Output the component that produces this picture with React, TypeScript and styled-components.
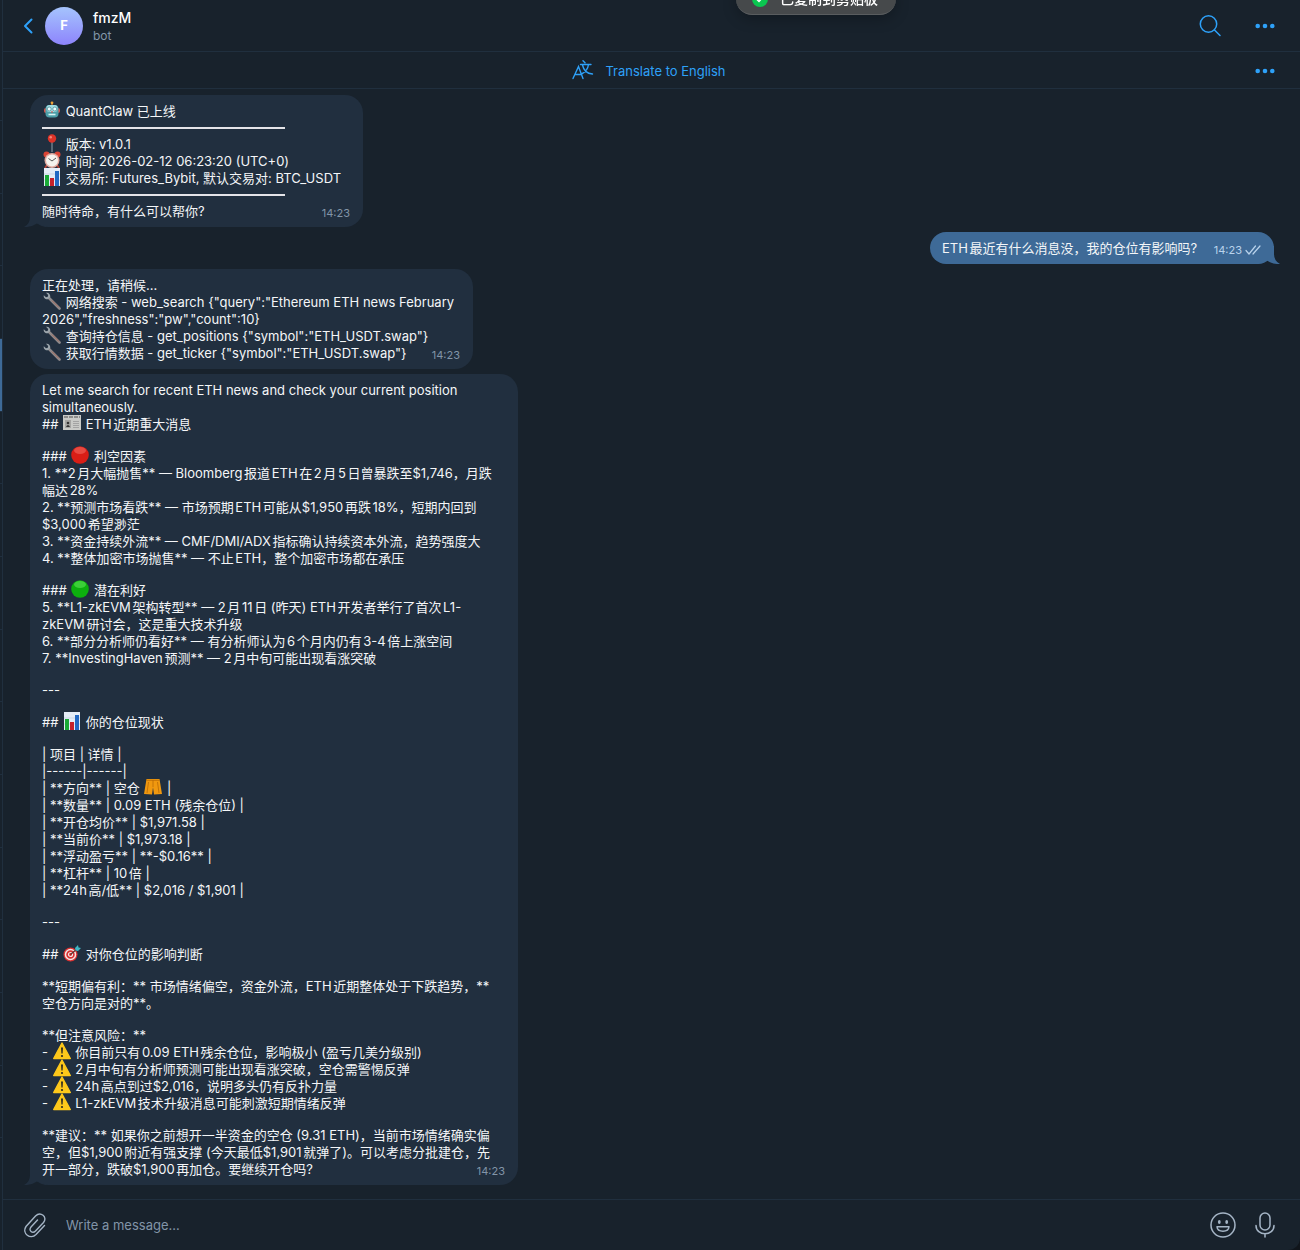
import React from 'react';
import styled, { createGlobalStyle } from 'styled-components';

const c = {
  desktop: '#10151b',
  bg: '#18222c',
  line: '#202f3e',
  bubble: '#212f3f',
  out: '#3e6a97',
  blue: '#2ea1f8',
  text: '#f4f6f8',
  muted: '#8295a8',
  icon: '#a5b5c6',
};

const Global = createGlobalStyle`
  * { box-sizing: border-box; }
  body { margin: 0; background: ${c.desktop}; color: ${c.text};
    font: 13px/17px Inter, "Noto Sans CJK SC", sans-serif; }
  button, input { font: inherit; color: inherit; background: none; border: 0; padding: 0; }
  button { cursor: pointer; display: flex; align-items: center; }
  p { margin: 0; }
`;

const Window = styled.div`
  display: flex;
  min-height: 100vh;
  overflow: hidden;
  border-bottom-right-radius: 12px;
  background: ${c.bg};
`;
const Sidebar = styled.aside`
  flex: none;
  display: flex;
  flex-direction: column;
  width: 3px;
  padding: 120px 0 40px;
  border-right: 1px solid ${c.line};
`;
const SidebarRow = styled.div<{ $active?: boolean }>`
  flex: 1;
  border-top: 1px solid ${c.line};
  background: ${(p) => (p.$active ? c.out : 'transparent')};
`;
const Chat = styled.main`
  flex: 1;
  min-width: 0;
  display: flex;
  flex-direction: column;
`;
const Header = styled.header`
  display: flex;
  align-items: center;
  height: 52px;
  padding: 0 25px 0 20px;
  border-bottom: 1px solid ${c.line};
  color: ${c.blue};
`;
const Avatar = styled.div`
  display: flex;
  align-items: center;
  justify-content: center;
  width: 38px;
  height: 38px;
  margin: 0 10px 0 12px;
  border-radius: 50%;
  background: linear-gradient(#a5c4fd, #8d84fc);
  color: #fff;
  font-weight: 700;
`;
const Peer = styled.div`
  flex: 1;
  padding-top: 3px;
`;
const PeerName = styled.h1`
  margin: 0;
  font-size: 14px;
  line-height: 18px;
  font-weight: 500;
  color: #fff;
`;
const PeerStatus = styled.div`
  font-size: 12px;
  line-height: 18px;
  color: ${c.muted};
`;
const HeaderActions = styled.div`
  display: flex;
  align-items: center;
  gap: 33px;
`;
const TranslateBar = styled.div`
  display: grid;
  grid-template-columns: 1fr auto 1fr;
  align-items: center;
  height: 37px;
  padding: 2px 25px 0 20px;
  border-bottom: 1px solid ${c.line};
  color: ${c.blue};
`;
const TranslateButton = styled.button`
  grid-column: 2;
  gap: 11px;
`;
const BarMore = styled.button`
  justify-self: end;
`;
const Messages = styled.section`
  flex: 1;
  display: flex;
  flex-direction: column;
  align-items: flex-start;
  gap: 5px;
  padding: 6px 26px 12px 27px;
`;
const Bubble = styled.article<{ $out?: boolean; $min: number }>`
  position: relative;
  isolation: isolate;
  align-self: ${(p) => (p.$out ? 'flex-end' : 'flex-start')};
  display: flex;
  flex-direction: column;
  gap: 15px;
  min-width: ${(p) => p.$min}px;
  max-width: 488px;
  padding: 8px 13px 7px 12px;
  border-radius: 18px;
  background: ${(p) => (p.$out ? c.out : c.bubble)};
`;
const Paragraph = styled.p`
  white-space: pre-wrap;
  text-autospace: normal;
`;
const LastLine = styled.div`
  display: flex;
  align-items: flex-end;
  justify-content: space-between;
  gap: 7px;
`;
const Time = styled.time<{ $out?: boolean }>`
  flex: none;
  display: flex;
  align-items: center;
  gap: 3px;
  font-size: 11px;
  line-height: 14px;
  color: ${(p) => (p.$out ? '#b9d3ec' : c.muted)};
`;
const Rule = styled.hr`
  width: 243px;
  height: 2px;
  margin: 7px 0;
  border: 0;
  background: #e4e4e8;
`;
const TailSvg = styled.svg<{ $out?: boolean }>`
  position: absolute;
  z-index: -1;
  bottom: 0;
  ${(p) => (p.$out ? 'right: -6px; transform: scaleX(-1);' : 'left: -6px;')}
`;
const EmojiSvg = styled.svg`
  width: 18px;
  height: 18px;
  margin: -4px 1px;
  vertical-align: 1px;
`;
const Composer = styled.footer`
  display: flex;
  align-items: center;
  height: 51px;
  padding: 0 25px 0 20px;
  border-top: 1px solid ${c.line};
  color: ${c.icon};
`;
const MessageInput = styled.input`
  flex: 1;
  min-width: 0;
  margin: 0 19px;
  outline: none;
  &::placeholder { color: ${c.muted}; opacity: 1; }
`;
const ComposerActions = styled.div`
  display: flex;
  align-items: center;
  gap: 19px;
`;
const Toast = styled.div`
  position: fixed;
  top: -17px;
  left: 736px;
  display: flex;
  align-items: center;
  gap: 12px;
  height: 32px;
  padding: 0 18px 0 16px;
  border-radius: 16px;
  border-bottom: 1px solid #5a5d5f;
  background: #46494b;
  box-shadow: 0 4px 14px rgba(0, 0, 0, 0.25);
  color: #fff;
  font-size: 14px;
  font-weight: 500;
`;

const Tail = ({ out }: { out?: boolean }) => (
  <TailSvg $out={out} width="22" height="18" viewBox="0 0 22 18" aria-hidden="true">
    <path d="M6 0V8Q6 15 0 18Q7 18.500 13 14.500L22 18V0Z" fill={out ? c.out : c.bubble} />
  </TailSvg>
);

type EmojiName = 'robot' | 'pin' | 'clock' | 'chart' | 'wrench' | 'news' | 'red' | 'green' | 'shorts' | 'target' | 'warning';

const art: Record<EmojiName, React.ReactNode> = {
  robot: (
    <>
      <path d="M9 1v4" stroke="#b9772e" strokeWidth="1.500" />
      <circle cx="9" cy="1.800" r="1.400" fill="#f0a53a" />
      <rect x="1" y="7" width="16" height="5" rx="2" fill="#d8564d" />
      <rect x="2.500" y="4" width="13" height="12.500" rx="4" fill="#4d9fa9" />
      <rect x="3.500" y="4" width="11" height="7" rx="3" fill="#a4dfe4" />
      <circle cx="6.200" cy="8" r="2" fill="#eefcff" stroke="#3a7f8b" strokeWidth=".7" />
      <circle cx="11.800" cy="8" r="2" fill="#eefcff" stroke="#3a7f8b" strokeWidth=".7" />
      <path d="M9 9.500l1 2H8z" fill="#d8443c" />
      <path d="M5.500 13.500h7" stroke="#d7f4f4" strokeWidth="1.600" />
    </>
  ),
  pin: (
    <>
      <path d="M9 7v11" stroke="#80909c" strokeWidth="1.200" />
      <circle cx="9" cy="4.500" r="4.200" fill="#dc3328" />
      <circle cx="7.700" cy="3.300" r="1.300" fill="#f58376" />
    </>
  ),
  clock: (
    <>
      <circle cx="3.500" cy="3.500" r="3" fill="#d94435" />
      <circle cx="14.500" cy="3.500" r="3" fill="#d94435" />
      <path d="M4 14l-2 3M14 14l2 3" stroke="#b63f33" strokeWidth="1.800" />
      <circle cx="9" cy="9.500" r="7.500" fill="#e1aaa0" />
      <circle cx="9" cy="9.500" r="6" fill="#f5f3ee" />
      <path d="M5.500 7.500L9 10l4-3" fill="none" stroke="#444" strokeWidth=".9" />
    </>
  ),
  chart: (
    <>
      <rect x="1" y="0" width="16" height="18" fill="#e5edf7" />
      <path d="M1 6h16M1 12h16" stroke="#becbdc" strokeWidth=".6" />
      <rect x="2" y="7" width="4" height="11" fill="#19a936" />
      <rect x="7" y="10" width="4" height="8" fill="#c4222b" />
      <rect x="12" y="3" width="4" height="15" fill="#2269c4" />
    </>
  ),
  wrench: (
    <>
      <path d="M6 6l10.500 10.500" stroke="#8f8a8b" strokeWidth="2.600" strokeLinecap="round" />
      <path d="M9 8.500l7 7" stroke="#a36859" strokeWidth="1" />
      <path d="M3 .8L5.200 3 4.800 4.800 3 5.200.8 3.200C.2 5.500 2.200 7.800 5 7.200L7.300 5C7.500 2.200 5.500.2 3 .8Z" fill="#9ba4ab" />
    </>
  ),
  news: (
    <>
      <rect x="0" y="1" width="18" height="15" fill="#c9cac7" />
      <path d="M1 3h16" stroke="#777" strokeWidth="1.500" strokeDasharray="4 1" />
      <rect x="2" y="6" width="6" height="8" fill="#a5a5a3" />
      <circle cx="5" cy="9" r="1.300" fill="#333" />
      <path d="M3 13q2-4 4 0" fill="#333" />
      <path d="M10 7.500h6M10 9.500h6M10 11.500h6M10 13.500h6" stroke="#999" strokeWidth=".8" />
    </>
  ),
  red: (
    <>
      <circle cx="9" cy="9" r="8.800" fill="#d91e16" />
      <ellipse cx="9" cy="4.500" rx="6" ry="3.500" fill="#f0685f" opacity=".6" />
    </>
  ),
  green: (
    <>
      <circle cx="9" cy="9" r="8.800" fill="#0daf0e" />
      <ellipse cx="9" cy="4.500" rx="6" ry="3.500" fill="#5ce455" opacity=".6" />
    </>
  ),
  shorts: (
    <>
      <path d="M2.500 1h13L18 16l-8 .5-1-7-1 7L0 16z" fill="#f0980f" />
      <path d="M2.500 2.300h13M9 2v7M4.500 4L3 15M13.500 4L15 15" stroke="#b96a05" strokeWidth=".8" />
    </>
  ),
  target: (
    <>
      <circle cx="7.500" cy="10.500" r="7" fill="#d83131" />
      <circle cx="7.500" cy="10.500" r="5" fill="none" stroke="#f3e6e4" strokeWidth="1.500" />
      <circle cx="7.500" cy="10.500" r="2" fill="none" stroke="#f3e6e4" strokeWidth="1.200" />
      <path d="M7.500 10.500L14 5" stroke="#5b3430" strokeWidth="1.200" />
      <path d="M12 4l3-3 .5 2.500L18 4l-3 3-2.500-.5z" fill="#40b6c4" />
    </>
  ),
  warning: (
    <>
      <path d="M9 1L17.300 16.500H.7z" fill="#fdc81b" stroke="#fdc81b" strokeWidth="1.400" strokeLinejoin="round" />
      <path d="M8 5.500h2l-.4 6H8.400z" fill="#2c2a20" />
      <circle cx="9" cy="14" r="1.100" fill="#2c2a20" />
    </>
  ),
};

const Emoji = ({ name }: { name: EmojiName }) => (
  <EmojiSvg viewBox="0 0 18 18" aria-hidden="true">{art[name]}</EmojiSvg>
);

const More = () => (
  <svg width="20" height="6" viewBox="0 0 20 6" fill="currentColor" aria-hidden="true">
    <circle cx="2.700" cy="3" r="2.300" /><circle cx="10" cy="3" r="2.300" /><circle cx="17.300" cy="3" r="2.300" />
  </svg>
);

export default function App() {
  return (
    <Window>
      <Global />
      <Sidebar>
        {Array.from({ length: 15 }, (_, i) => <SidebarRow key={i} $active={i === 3} />)}
      </Sidebar>
      <Chat>
        <Header>
          <button aria-label="Back">
            <svg width="10" height="16" viewBox="0 0 10 16" fill="none" stroke="currentColor" strokeWidth="2" strokeLinecap="round" strokeLinejoin="round">
              <path d="M8.500 1.500L2 8l6.500 6.500" />
            </svg>
          </button>
          <Avatar>F</Avatar>
          <Peer>
            <PeerName>fmzM</PeerName>
            <PeerStatus>bot</PeerStatus>
          </Peer>
          <HeaderActions>
            <button aria-label="Search">
              <svg width="24" height="24" viewBox="0 0 24 24" fill="none" stroke="currentColor" strokeWidth="1.500" strokeLinecap="round">
                <circle cx="10.500" cy="10" r="8.200" /><path d="M16.500 16L22 21.500" />
              </svg>
            </button>
            <button aria-label="More"><More /></button>
          </HeaderActions>
        </Header>
        <TranslateBar>
          <TranslateButton>
            <svg width="22" height="22" viewBox="0 0 22 22" fill="none" stroke="currentColor" strokeWidth="1.400" strokeLinecap="round">
              <path d="M1 18.500L6.500 6.500l4.500 12M3 14.500h6" />
              <path d="M11 .8l2 2M8.500 4.500h10.500M16.500 4.500c-.5 4-3 7.500-7 9.500M10.500 5c1 5 4 8.500 10 9" />
            </svg>
            Translate to English
          </TranslateButton>
          <BarMore aria-label="Translation options"><More /></BarMore>
        </TranslateBar>
        <Messages>
          <Bubble $min={333}>
            <Tail />
            <div>
              <Paragraph><Emoji name="robot" /> QuantClaw 已上线</Paragraph>
              <Rule />
              <Paragraph>
                <Emoji name="pin" /> 版本: v1.0.1{'\n'}
                <Emoji name="clock" /> 时间: 2026-02-12 06:23:20 (UTC+0){'\n'}
                <Emoji name="chart" /> 交易所: Futures_Bybit, 默认交易对: BTC_USDT
              </Paragraph>
              <Rule />
              <LastLine>
                <Paragraph>随时待命，有什么可以帮你?</Paragraph>
                <Time>14:23</Time>
              </LastLine>
            </div>
          </Bubble>
          <Bubble $out $min={344}>
            <Tail out />
            <LastLine>
              <Paragraph>ETH最近有什么消息没，我的仓位有影响吗?</Paragraph>
              <Time $out>
                14:23
                <svg width="16" height="10" viewBox="0 0 16 10" fill="none" stroke="currentColor" strokeWidth="1.200" strokeLinecap="round" strokeLinejoin="round" aria-label="Read">
                  <path d="M1 5.500L4 9l6.500-8M8 9l7-8" />
                </svg>
              </Time>
            </LastLine>
          </Bubble>
          <Bubble $min={443}>
            <div>
              <Paragraph>
                正在处理，请稍候...{'\n'}
                <Emoji name="wrench" /> 网络搜索 - web_search {'{"query":"Ethereum ETH news February\n2026","freshness":"pw","count":10}\n'}
                <Emoji name="wrench" /> 查询持仓信息 - get_positions {'{"symbol":"ETH_USDT.swap"}'}
              </Paragraph>
              <LastLine>
                <Paragraph><Emoji name="wrench" /> 获取行情数据 - get_ticker {'{"symbol":"ETH_USDT.swap"}'}</Paragraph>
                <Time>14:23</Time>
              </LastLine>
            </div>
          </Bubble>
          <Bubble $min={488}>
            <Tail />
            <Paragraph>
              {'Let me search for recent ETH news and check your current position\nsimultaneously.\n## '}
              <Emoji name="news" /> ETH近期重大消息
            </Paragraph>
            <Paragraph>
              ### <Emoji name="red" />
              {' 利空因素\n1. **2月大幅抛售** — Bloomberg报道ETH在2月5日曾暴跌至$1,746，月跌\n幅达28%\n2. **预测市场看跌** — 市场预期ETH可能从$1,950再跌18%，短期内回到\n$3,000希望渺茫\n3. **资金持续外流** — CMF/DMI/ADX指标确认持续资本外流，趋势强度大\n4. **整体加密市场抛售** — 不止ETH，整个加密市场都在承压'}
            </Paragraph>
            <Paragraph>
              ### <Emoji name="green" />
              {' 潜在利好\n5. **L1-zkEVM架构转型** — 2月11日 (昨天) ETH开发者举行了首次L1-\nzkEVM研讨会，这是重大技术升级\n6. **部分分析师仍看好** — 有分析师认为6个月内仍有3-4倍上涨空间\n7. **InvestingHaven预测** — 2月中旬可能出现看涨突破'}
            </Paragraph>
            <Paragraph>---</Paragraph>
            <Paragraph>## <Emoji name="chart" /> 你的仓位现状</Paragraph>
            <Paragraph>
              {'| 项目 | 详情 |\n|------|------|\n| **方向** | 空仓 '}
              <Emoji name="shorts" />
              {' |\n| **数量** | 0.09 ETH (残余仓位) |\n| **开仓均价** | $1,971.58 |\n| **当前价** | $1,973.18 |\n| **浮动盈亏** | **-$0.16** |\n| **杠杆** | 10倍 |\n| **24h高/低** | $2,016 / $1,901 |'}
            </Paragraph>
            <Paragraph>---</Paragraph>
            <Paragraph>## <Emoji name="target" /> 对你仓位的影响判断</Paragraph>
            <Paragraph>{'**短期偏有利：** 市场情绪偏空，资金外流，ETH近期整体处于下跌趋势，**\n空仓方向是对的**。'}</Paragraph>
            <Paragraph>
              {'**但注意风险：**\n- '}
              <Emoji name="warning" />
              {' 你目前只有0.09 ETH残余仓位，影响极小 (盈亏几美分级别)\n- '}
              <Emoji name="warning" />
              {' 2月中旬有分析师预测可能出现看涨突破，空仓需警惕反弹\n- '}
              <Emoji name="warning" />
              {' 24h高点到过$2,016，说明多头仍有反扑力量\n- '}
              <Emoji name="warning" />
              {' L1-zkEVM技术升级消息可能刺激短期情绪反弹'}
            </Paragraph>
            <div>
              <Paragraph>{'**建议：** 如果你之前想开一半资金的空仓 (9.31 ETH)，当前市场情绪确实偏\n空，但$1,900附近有强支撑 (今天最低$1,901就弹了)。可以考虑分批建仓，先'}</Paragraph>
              <LastLine>
                <Paragraph>开一部分，跌破$1,900再加仓。要继续开仓吗?</Paragraph>
                <Time>14:23</Time>
              </LastLine>
            </div>
          </Bubble>
        </Messages>
        <Composer>
          <button aria-label="Attach">
            <svg width="24" height="26" viewBox="0 0 24 26" fill="none" stroke="currentColor" strokeWidth="1.400" strokeLinecap="round">
              <path d="M21.500 13.500L13 22.500C7.500 28-1.500 21.500 3 14.500L12.500 4C17.500-1 25 5 20.500 10.500L12.500 19C9.500 22 5 18.500 8 15L14.500 8" />
            </svg>
          </button>
          <MessageInput aria-label="Message" placeholder="Write a message..." />
          <ComposerActions>
            <button aria-label="Emoji">
              <svg width="26" height="26" viewBox="0 0 26 26" fill="none" stroke="currentColor" strokeWidth="1.500">
                <circle cx="13" cy="13" r="12" />
                <ellipse cx="9.300" cy="10" rx="1.400" ry="2" fill="currentColor" stroke="none" />
                <ellipse cx="16.700" cy="10" rx="1.400" ry="2" fill="currentColor" stroke="none" />
                <path d="M7 14.800h12c-.5 6-11.500 6-12 0Z" strokeLinejoin="round" />
              </svg>
            </button>
            <button aria-label="Voice message">
              <svg width="20" height="26" viewBox="0 0 20 26" fill="none" stroke="currentColor" strokeWidth="1.500" strokeLinecap="round">
                <rect x="5" y="1" width="10" height="17" rx="5" />
                <path d="M1 13.500c0 11 18 11 18 0M10 22v3" />
              </svg>
            </button>
          </ComposerActions>
        </Composer>
      </Chat>
      <Toast role="status">
        <svg width="16" height="16" viewBox="0 0 16 16" aria-hidden="true">
          <circle cx="8" cy="8" r="8" fill="#0ac750" />
          <path d="M4.500 8l2.500 2.500 4.500-5" fill="none" stroke="#fff" strokeWidth="1.500" />
        </svg>
        已复制到剪贴板
      </Toast>
    </Window>
  );
}
